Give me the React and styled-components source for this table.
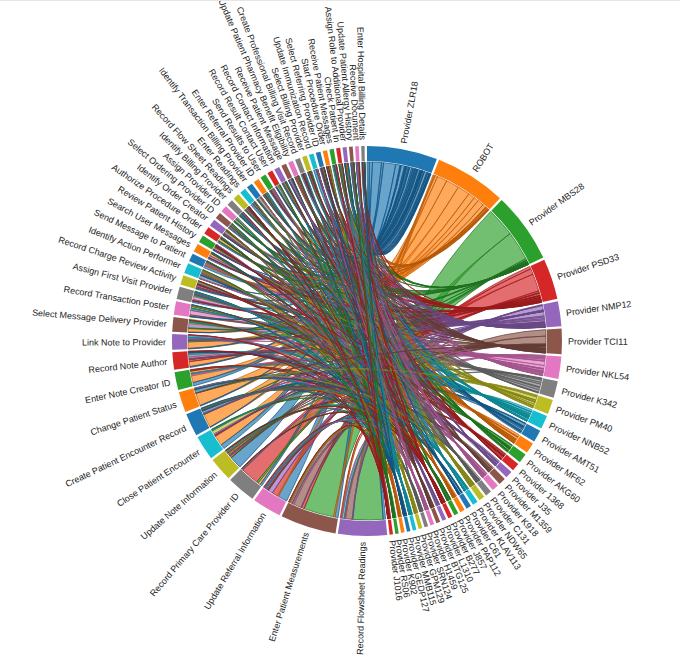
import React, { useMemo } from 'react'
import styled, { createGlobalStyle } from 'styled-components'

const GlobalStyle = createGlobalStyle`
  html, body {
    margin: 0;
    padding: 0;
    background: #fff;
  }
  body {
    font-family: "Liberation Sans", Arial, sans-serif;
  }
`

const Page = styled.div`
  width: 680px;
  height: 670px;
  box-sizing: border-box;
  border-top: 1px solid #e6e6e6;
  background: #fff;
  overflow: hidden;
`

const ChordSvg = styled.svg`
  display: block;
`

const GroupArc = styled.path`
  fill: ${p => p.$color};
`

const Ribbon = styled.path`
  fill: ${p => p.$color};
  fill-opacity: 0.67;
  stroke: ${p => p.$edge};
  stroke-width: 0.7;
`

const Label = styled.text`
  font-family: "Liberation Sans", Arial, sans-serif;
  font-size: 9px;
  fill: #222;
`

const CAT10 = [
  '#1f77b4', '#ff7f0e', '#2ca02c', '#d62728', '#9467bd',
  '#8c564b', '#e377c2', '#7f7f7f', '#bcbd22', '#17becf',
]

// span of each arc in degrees, read off the reference
const providers = [
  ['Provider ZLR18', 20.9], ['ROBOT', 21.2], ['Provider MBS28', 20.9],
  ['Provider PSD33', 12.1], ['Provider NMP12', 7.4], ['Provider TCI11', 7.5],
  ['Provider NKL54', 6.6], ['Provider K342', 5.0], ['Provider PM40', 4.3],
  ['Provider NNB52', 4.0], ['Provider AMT51', 3.6], ['Provider MF62', 3.2],
  ['Provider AKG60', 2.8], ['Provider 1368', 2.4], ['Provider J35', 2.1],
  ['Provider M1359', 2.1], ['Provider K918', 2.0], ['Provider C131', 1.8],
  ['Provider NDW65', 1.7], ['Provider KLAV113', 1.6], ['Provider C61', 1.5],
  ['Provider PAP112', 1.4], ['Provider J857', 1.3], ['Provider B277', 1.25],
  ['Provider L1310', 1.2], ['Provider BTG125', 1.2], ['Provider H1459', 1.15],
  ['Provider SRN124', 1.1], ['Provider GPM129', 1.1], ['Provider MMB115', 1.1],
  ['Provider GEDP127', 1.05], ['Provider K902', 1.05], ['Provider RS06', 1.0],
  ['Provider J1016', 1.0],
]

const tasks = [
  ['Record Flowsheet Readings', 14.5], ['Enter Patient Measurements', 16.6],
  ['Update Referral Information', 8.6], ['Record Primary Care Provider ID', 8.5],
  ['Update Note Information', 7.1], ['Close Patient Encounter', 7.3],
  ['Create Patient Encounter Record', 6.8], ['Change Patient Status', 6.1],
  ['Enter Note Creator ID', 5.3], ['Record Note Author', 5.2],
  ['Link Note to Provider', 4.6], ['Select Message Delivery Provider', 4.3],
  ['Record Transaction Poster', 4.0], ['Assign First Visit Provider', 3.7],
  ['Record Charge Review Activity', 2.8], ['Identify Action Performer', 3.1],
  ['Send Message to Patient', 2.4], ['Search User Messages', 2.5],
  ['Review Patient History', 2.2], ['Authorize Procedure Order', 2.2],
  ['Identify Order Creator', 2.1], ['Select Ordering Provider ID', 1.9],
  ['Assign Provider ID', 1.9], ['Identify Billing Provider', 1.8],
  ['Record Flow Sheet Readings', 1.9], ['Enter Readings', 1.8],
  ['Identify Transaction Billing Provider', 1.8], ['Enter Referral Provider ID', 1.7],
  ['Send Results to User', 1.7], ['Record Result Contact User', 1.6],
  ['Record Contact Information', 1.6], ['Receive Patient Message', 1.5],
  ['Update Patient Pharmacy Benefit Eligibility', 1.5],
  ['Create Professional Billing Visit Record', 1.5], ['Select Billing Provider', 1.4],
  ['Update Immunization Record', 1.4], ['Select Referring Provider ID', 1.4],
  ['Start Procedure Order', 1.3], ['Receive Patient Messages', 1.3],
  ['Check Patient In', 1.2], ['Assign Role to Additional Provider', 1.2],
  ['Update Patient Allergy History', 1.1], ['Receive Document', 1.1],
  ['Enter Hospital Billing Details', 1.0],
]

// the few heavy links that stand out in the picture: [provider, task, weight]
const heavyLinks = [
  [1, 6, 9], [1, 7, 9], [1, 5, 3], [1, 8, 2], [1, 9, 1.5], [1, 10, 1.2],
  [2, 0, 12], [2, 1, 12], [2, 3, 1],
  [3, 3, 7], [3, 2, 2], [3, 9, 1],
  [4, 2, 1.5], [4, 11, 1],
  [5, 1, 3], [5, 0, 2.5],
  [0, 4, 3], [0, 2, 1.5], [0, 5, 1],
  [6, 12, 1], [6, 13, 1],
  [8, 5, 1], [9, 6, 1], [10, 7, 0.8], [11, 8, 0.8],
]

const PAD = 0.7
const R_OUT = 195
const R_IN = 180
const R_RIB = 179
const CX = 367
const CY = 340

function mulberry32(a) {
  return function () {
    a |= 0
    a = (a + 0x6d2b79f5) | 0
    let t = Math.imul(a ^ (a >>> 15), 1 | a)
    t = (t + Math.imul(t ^ (t >>> 7), 61 | t)) ^ t
    return ((t ^ (t >>> 14)) >>> 0) / 4294967296
  }
}

const darker = hex => {
  const n = parseInt(hex.slice(1), 16)
  const f = 0.7
  return `rgb(${Math.round(((n >> 16) & 255) * f)},${Math.round(((n >> 8) & 255) * f)},${Math.round((n & 255) * f)})`
}

const rad = d => (d * Math.PI) / 180
const pt = (a, r) => [r * Math.sin(a), -r * Math.cos(a)]
const f2 = v => v.toFixed(2)

function arcPath(a0, a1, ri, ro) {
  const large = a1 - a0 > Math.PI ? 1 : 0
  const [x0, y0] = pt(a0, ro)
  const [x1, y1] = pt(a1, ro)
  const [x2, y2] = pt(a1, ri)
  const [x3, y3] = pt(a0, ri)
  return `M${f2(x0)},${f2(y0)}A${ro},${ro} 0 ${large} 1 ${f2(x1)},${f2(y1)}L${f2(x2)},${f2(y2)}A${ri},${ri} 0 ${large} 0 ${f2(x3)},${f2(y3)}Z`
}

function ribbonPath(s0, s1, t0, t1, r) {
  const [x0, y0] = pt(s0, r)
  const [x1, y1] = pt(s1, r)
  const [x2, y2] = pt(t0, r)
  const [x3, y3] = pt(t1, r)
  return `M${f2(x0)},${f2(y0)}A${r},${r} 0 0 1 ${f2(x1)},${f2(y1)}Q0,0 ${f2(x2)},${f2(y2)}A${r},${r} 0 0 1 ${f2(x3)},${f2(y3)}Q0,0 ${f2(x0)},${f2(y0)}Z`
}

function buildChart() {
  const rng = mulberry32(11)
  const P = providers.length
  const T = tasks.length

  const M = providers.map((_, p) =>
    tasks.map(() => {
      const dens = p === 0 ? 0.9 : p < 3 ? 0.3 : p < 7 ? 0.45 : 0.3
      return rng() < dens ? 0.05 + rng() * rng() : 0
    })
  )
  for (let t = 0; t < T; t++) M[0][t] = Math.max(M[0][t], 0.05)
  for (let p = 0; p < P; p++) {
    let n = M[p].filter(v => v > 0).length
    while (n < 3) {
      const t = Math.floor(rng() * T)
      if (!M[p][t]) {
        M[p][t] = 0.1 + rng() * 0.3
        n++
      }
    }
  }
  heavyLinks.forEach(([p, t, w]) => (M[p][t] += w))

  const rowT = providers.map(d => d[1])
  const sumR = rowT.reduce((a, b) => a + b, 0)
  const sumC = tasks.reduce((a, d) => a + d[1], 0)
  const colT = tasks.map(d => (d[1] * sumR) / sumC)

  // fit rows and columns to the arc sizes
  for (let it = 0; it < 80; it++) {
    for (let p = 0; p < P; p++) {
      const s = M[p].reduce((a, b) => a + b, 0)
      const k = rowT[p] / s
      for (let t = 0; t < T; t++) M[p][t] *= k
    }
    for (let t = 0; t < T; t++) {
      let s = 0
      for (let p = 0; p < P; p++) s += M[p][t]
      const k = colT[t] / s
      for (let p = 0; p < P; p++) M[p][t] *= k
    }
  }

  const scale = (360 - (P + T) * PAD) / (sumR + sumC)
  const taskK = sumC / sumR

  const groups = []
  const provSeg = providers.map(() => [])
  const taskSeg = tasks.map(() => [])
  let x = 0

  providers.forEach(([label], p) => {
    const a0 = x
    for (let t = 0; t < T; t++) {
      const w = M[p][t] * scale
      provSeg[p][t] = [x, x + w]
      x += w
    }
    groups.push({ label, a0, a1: x, color: CAT10[groups.length % 10] })
    x += PAD
  })

  tasks.forEach(([label], t) => {
    const a0 = x
    for (let p = 0; p < P; p++) {
      const w = M[p][t] * taskK * scale
      taskSeg[t][p] = [x, x + w]
      x += w
    }
    groups.push({ label, a0, a1: x, color: CAT10[groups.length % 10] })
    x += PAD
  })

  const chords = []
  for (let p = 0; p < P; p++) {
    for (let t = 0; t < T; t++) {
      if (M[p][t] <= 0.0001) continue
      const [s0, s1] = provSeg[p][t]
      const [t0, t1] = taskSeg[t][p]
      chords.push({
        key: `${p}-${t}`,
        d: ribbonPath(rad(s0), rad(s1), rad(t0), rad(t1), R_RIB),
        color: CAT10[p % 10],
        w: M[p][t],
      })
    }
  }
  chords.sort((a, b) => b.w - a.w)

  return { groups, chords }
}

const ChordDiagram = () => {
  const { groups, chords } = useMemo(buildChart, [])

  return (
    <ChordSvg width="680" height="669" viewBox="0 0 680 669">
      <g transform={`translate(${CX},${CY})`}>
        <g>
          {chords.map(c => (
            <Ribbon key={c.key} d={c.d} $color={c.color} $edge={darker(c.color)} />
          ))}
        </g>
        <g>
          {groups.map(g => (
            <GroupArc key={g.label} d={arcPath(rad(g.a0), rad(g.a1), R_IN, R_OUT)} $color={g.color} />
          ))}
        </g>
        <g>
          {groups.map(g => {
            const mid = (g.a0 + g.a1) / 2
            const flip = mid > 180
            return (
              <Label
                key={g.label}
                dy="0.35em"
                textAnchor={flip ? 'end' : 'start'}
                transform={`rotate(${f2(mid - 90)}) translate(${R_OUT + 6},0)${flip ? ' rotate(180)' : ''}`}
              >
                {g.label}
              </Label>
            )
          })}
        </g>
      </g>
    </ChordSvg>
  )
}

const App = () => (
  <Page>
    <GlobalStyle />
    <ChordDiagram />
  </Page>
)

export default App
